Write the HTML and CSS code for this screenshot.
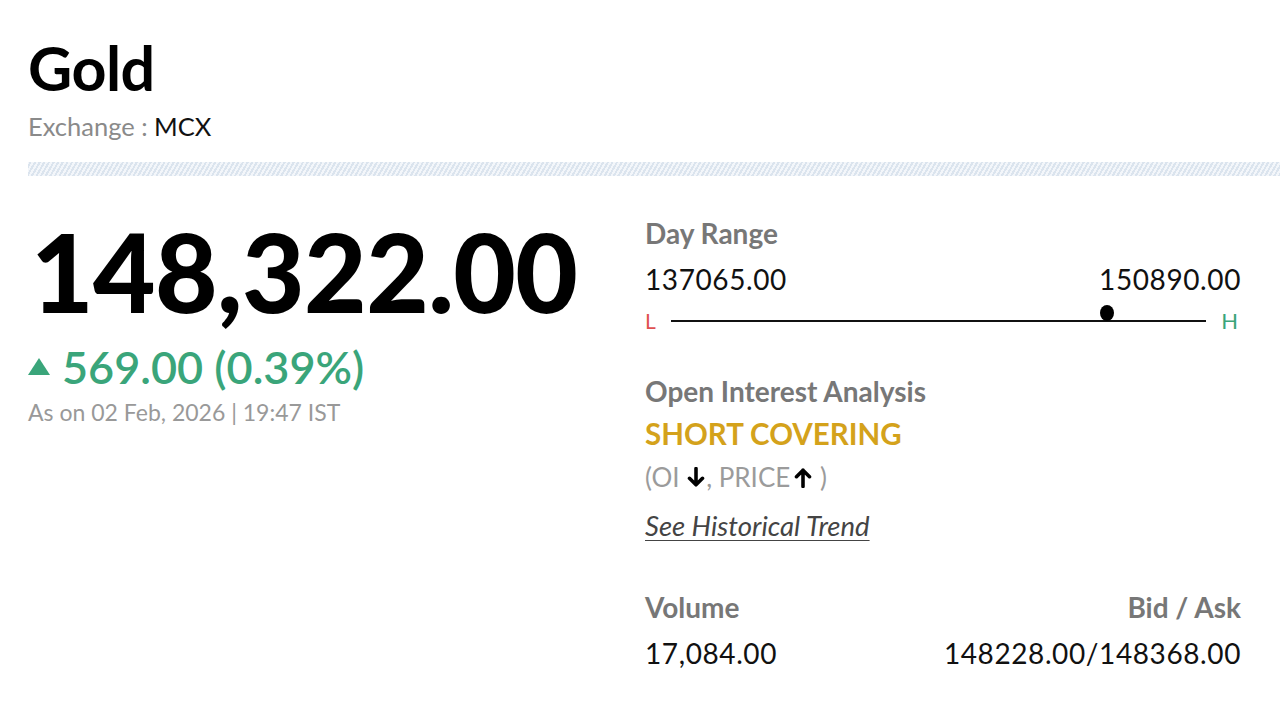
FILE: index.html
```html
<!DOCTYPE html>
<html>
<head>
<meta charset="utf-8">
<link rel="stylesheet" href="styles.css">
</head>
<body>
<div class="page">
  <header class="head">
    <h1 class="title">Gold</h1>
    <div class="exchange"><span class="ex-label">Exchange : </span><span class="ex-val">MCX</span></div>
  </header>
  <div class="stripe"></div>
  <div class="main">
    <section class="left">
      <div class="price">148,322.00</div>
      <div class="change"><span class="tri"></span><span>569.00 (0.39%)</span></div>
      <div class="asof">As on 02 Feb, 2026 | 19:47 IST</div>
    </section>
    <section class="right">
      <div class="label">Day Range</div>
      <div class="range-vals"><span>137065.00</span><span>150890.00</span></div>
      <div class="range-bar">
        <span class="lo">L</span>
        <div class="track"><span class="dot" style="left: 81.4%"></span></div>
        <span class="hi">H</span>
      </div>
      <div class="label oi-label">Open Interest Analysis</div>
      <div class="oi-status">SHORT COVERING</div>
      <div class="oi-detail">(OI <svg class="arr" viewBox="0 0 16 20"><path d="M8 1.5v15.5M1.8 10.8L8 17l6.2-6.2" fill="none" stroke="#000" stroke-width="3.4" stroke-linecap="round" stroke-linejoin="round"/></svg>, PRICE<svg class="arr arr-up" viewBox="0 0 16 20"><path d="M8 18.5V3M1.8 9.2L8 3l6.2 6.2" fill="none" stroke="#000" stroke-width="3.4" stroke-linecap="round" stroke-linejoin="round"/></svg> )</div>
      <a class="trend" href="#">See Historical Trend</a>
      <div class="stats">
        <div class="stat">
          <div class="label">Volume</div>
          <div class="val">17,084.00</div>
        </div>
        <div class="stat stat-r">
          <div class="label">Bid / Ask</div>
          <div class="val">148228.00/148368.00</div>
        </div>
      </div>
    </section>
  </div>
</div>
</body>
</html>
```
FILE: styles.css
```css
* { box-sizing: border-box; margin: 0; padding: 0; }
html, body { background: #fff; }
body { font-family: Lato, "Noto Sans", sans-serif; color: #111; }
.page { padding: 34px 0 0 28px; width: 1280px; }
.title { font-size: 61px; font-weight: 700; line-height: 68px; color: #000; letter-spacing: -0.5px; }
.exchange { font-size: 25.5px; line-height: 32px; margin-top: 8px; }
.ex-label { color: #8a8a8a; }
.ex-val { color: #111; }
.stripe {
  margin-top: 20px;
  height: 14px;
  background: repeating-linear-gradient(-60deg, #dbe4ee 0 2px, #f3f6fa 2px 4px);
}
.main { display: flex; margin-top: 40px; }
.left { width: 617px; }
.price { font-size: 108px; font-weight: 900; line-height: 110px; color: #000; letter-spacing: -0.6px; margin-left: 3px; }
.change { display: flex; align-items: center; gap: 12px; color: #3aa57a; font-size: 45px; font-weight: 600; line-height: 52px; margin-top: 15px; }
.tri { width: 0; height: 0; border-left: 11px solid transparent; border-right: 11px solid transparent; border-bottom: 17px solid #3aa57a; margin-top: -2px; }
.asof { color: #999; font-size: 23px; line-height: 28px; margin-top: 5px; }
.right { width: 596px; }
.label { color: #777; font-size: 28px; font-weight: 700; line-height: 34px; }
.range-vals { display: flex; justify-content: space-between; font-size: 28px; letter-spacing: 0.6px; line-height: 34px; color: #111; margin-top: 12px; }
.range-bar { display: flex; align-items: center; gap: 15px; margin-top: 13px; height: 24px; }
.lo { color: #e05050; font-size: 21px; line-height: 24px; }
.hi { color: #3aa57a; font-size: 22px; line-height: 24px; margin-right: 3px; }
.track { flex: 1; height: 2px; background: #111; position: relative; }
.dot { position: absolute; width: 14px; height: 16px; border-radius: 50%; background: #000; top: -15px; transform: translateX(-50%); }
.oi-label { margin-top: 41px; }
.oi-status { color: #d4a21b; font-size: 29.5px; font-weight: 700; line-height: 36px; margin-top: 8px; }
.oi-detail { color: #9b9b9b; font-size: 26px; line-height: 34px; margin-top: 8px; display: flex; align-items: center; white-space: pre; }
.arr { width: 18px; height: 21px; margin: 0 1px; }
.arr-up { margin-left: 4px; }
.trend { display: inline-block; color: #444; font-size: 27.5px; font-style: italic; line-height: 34px; margin-top: 15px; text-decoration: underline; text-underline-offset: 4px; text-decoration-thickness: 1px; }
.stats { display: flex; justify-content: space-between; margin-top: 47px; }
.stat-r { text-align: right; }
.stat .val { font-size: 28px; letter-spacing: 0.6px; line-height: 34px; color: #111; margin-top: 12px; }
```
